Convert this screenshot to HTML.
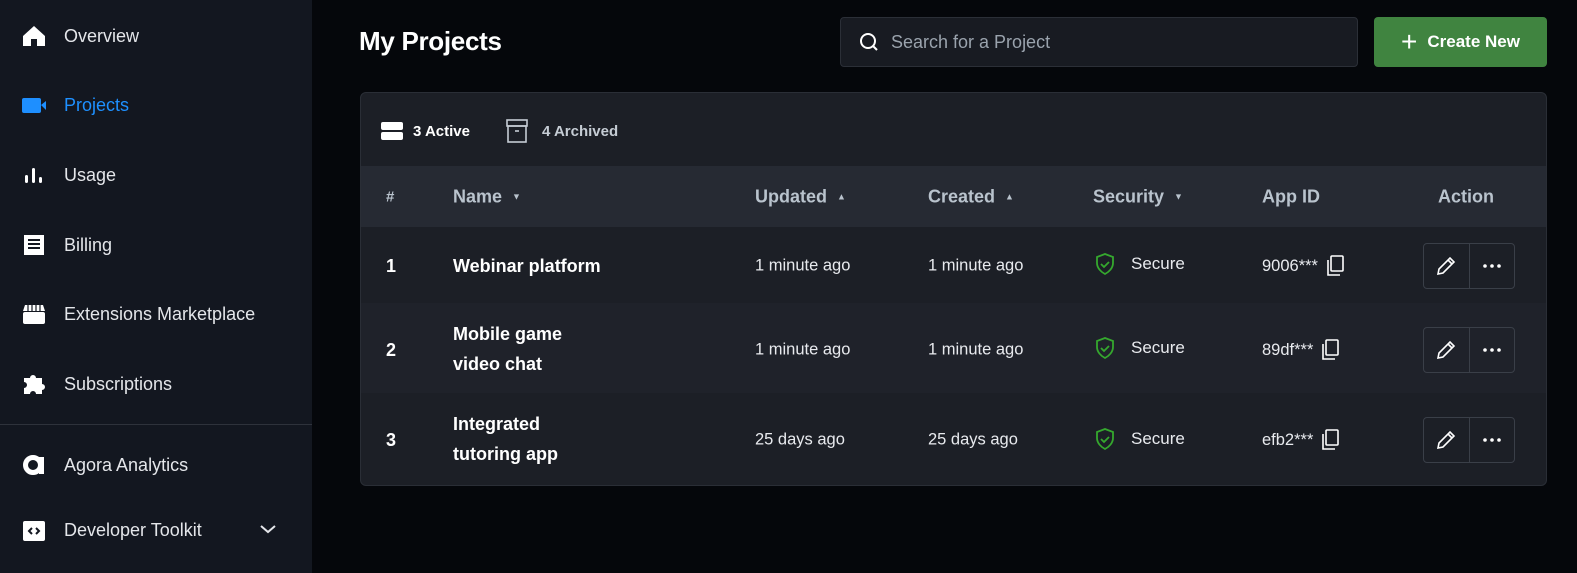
<!DOCTYPE html>
<html><head><style>
*{margin:0;padding:0;box-sizing:border-box}
body{width:1577px;height:573px;background:#05070b;font-family:"Liberation Sans",sans-serif;color:#e6e8ec;position:relative;overflow:hidden}
.sb{position:absolute;left:0;top:0;width:312px;height:573px;background:#131720}
.it{position:absolute;left:22px;display:flex;align-items:center;font-size:18px;color:#e4e6ea;height:30px}
.it svg{width:24px;height:24px;margin-right:18px}
.div{position:absolute;left:0;top:424px;width:312px;height:1px;background:#2e323b}
h1{position:absolute;left:359px;top:26px;font-size:26px;font-weight:bold;color:#fff;letter-spacing:-0.3px}
.search{position:absolute;left:840px;top:17px;width:518px;height:50px;background:#181b22;border:1px solid #2b2f37;border-radius:4px;display:flex;align-items:center;padding-left:18px;font-size:18px;color:#9aa3ad}
.search svg{margin-right:12px}
.btn{position:absolute;left:1374px;top:17px;width:173px;height:50px;background:#408440;border-radius:4px;display:flex;align-items:center;justify-content:center;font-size:17px;font-weight:bold;color:#fff}
.card{position:absolute;left:360px;top:92px;width:1187px;height:394px;background:#1c1f26;border:1px solid #2a2e36;border-radius:6px;overflow:hidden}
.tabs{position:absolute;top:26px;left:20px;display:flex;align-items:center;font-size:15px;font-weight:bold}
.hdr{position:absolute;top:73px;left:0;width:100%;height:61px;background:#262a33}
.row{position:absolute;left:0;width:100%}
.c{position:absolute;font-size:16.5px;color:#e8eaee;transform:translateY(-50%)}
.h{font-size:18px;font-weight:bold;color:#b9c3cd}
.b{font-weight:bold;font-size:18px;color:#fff;line-height:30px}
.act{position:absolute;width:92px;height:46px;border:1px solid #3a3f48;border-radius:4px;display:flex;transform:translateY(-50%)}
.act div{flex:1;display:flex;align-items:center;justify-content:center}
.act div:first-child{border-right:1px solid #3a3f48}
.tri{display:inline-block;margin-left:10px;font-size:9px;vertical-align:3px}
</style></head><body>
<div class="sb">
<div class="it" style="top:21px"><svg viewBox="0 0 24 24"><path d="M12 2L1 12v10h8v-7h6v7h8V12z" fill="#fff"/></svg>Overview</div>
<div class="it" style="top:90px;color:#1e90ff"><svg viewBox="0 0 24 24"><rect x="0" y="5" width="19" height="15" rx="2" fill="#1e8fff"/><path d="M19 12l5-4v9z" fill="#1e8fff"/></svg>Projects</div>
<div class="it" style="top:160px"><svg viewBox="0 0 24 24"><rect x="3" y="12" width="3" height="8" rx="1.5" fill="#fff"/><rect x="10" y="5" width="3" height="15" rx="1.5" fill="#fff"/><rect x="17" y="14" width="3" height="6" rx="1.5" fill="#fff"/></svg>Usage</div>
<div class="it" style="top:230px"><svg viewBox="0 0 24 24"><rect x="2" y="2" width="20" height="20" fill="#fff"/><path d="M6 7h12M6 11h12M6 15h12" stroke="#131720" stroke-width="2"/></svg>Billing</div>
<div class="it" style="top:299px"><svg viewBox="0 0 24 24"><path d="M1 9l2-6h18l2 6z" fill="#fff"/><path d="M6 3v6M10 3v6M14 3v6M18 3v6" stroke="#131720" stroke-width="1.2"/><rect x="1" y="10" width="22" height="12" rx="2" fill="#fff"/></svg>Extensions Marketplace</div>
<div class="it" style="top:369px"><svg viewBox="0 0 24 24"><path d="M2 6h6a3 3 0 016 0h6v6a3 3 0 010 6v4h-6a3 3 0 00-6 0H2v-6a3 3 0 000-6z" fill="#fff"/></svg>Subscriptions</div>
<div class="div"></div>
<div class="it" style="top:450px"><svg viewBox="0 0 24 24"><circle cx="11" cy="12" r="7.5" fill="none" stroke="#fff" stroke-width="5"/><rect x="17" y="4" width="5" height="17" fill="#fff"/></svg>Agora Analytics</div>
<div class="it" style="top:515px"><svg viewBox="0 0 24 24"><rect x="1" y="3" width="22" height="20" rx="2" fill="#fff"/><path d="M10 10l-3 3 3 3M14 10l3 3-3 3" stroke="#131720" stroke-width="2" fill="none"/></svg>Developer Toolkit</div>
<svg style="position:absolute;left:259px;top:523px" width="18" height="12" viewBox="0 0 18 12"><path d="M2 3l7 6 7-6" stroke="#e4e6ea" stroke-width="2" fill="none"/></svg>
</div>
<h1>My Projects</h1>
<div class="search"><svg width="20" height="20" viewBox="0 0 20 20"><circle cx="9" cy="9" r="7" fill="none" stroke="#fff" stroke-width="2"/><path d="M14 14l4 4" stroke="#fff" stroke-width="2"/></svg>Search for a Project</div>
<div class="btn"><span style="font-size:28px;font-weight:normal;margin-right:10px;line-height:1">+</span>Create New</div>
<div class="card">
<div class="tabs"><svg width="22" height="18" viewBox="0 0 22 18"><rect x="0" y="0" width="22" height="8" rx="2" fill="#fff"/><rect x="0" y="10" width="22" height="8" rx="2" fill="#fff"/></svg><span style="margin-left:10px;color:#fff">3 Active</span>
<svg style="margin-left:36px" width="22" height="24" viewBox="0 0 22 24"><rect x="1" y="1" width="20" height="6" fill="none" stroke="#c5ccd4" stroke-width="1.6"/><rect x="2" y="7" width="18" height="16" fill="none" stroke="#c5ccd4" stroke-width="1.6"/><path d="M9 12h4" stroke="#c5ccd4" stroke-width="1.6"/></svg><span style="margin-left:14px;color:#c5ccd4">4 Archived</span></div>
<div class="hdr">
<div class="c h" style="left:25px;top:31px;font-size:15px">#</div>
<div class="c h" style="left:92px;top:31px">Name<span class="tri">▼</span></div>
<div class="c h" style="left:394px;top:31px">Updated<span class="tri">▲</span></div>
<div class="c h" style="left:567px;top:31px">Created<span class="tri">▲</span></div>
<div class="c h" style="left:732px;top:31px">Security<span class="tri">▼</span></div>
<div class="c h" style="left:901px;top:31px">App ID</div>
<div class="c h" style="left:1077px;top:31px">Action</div>
</div>
<div class="row" style="top:134px;height:76px"></div>
<div class="row" style="top:210px;height:90px;background:#1f222a"></div>
<div class="c b" style="left:25px;top:173px">1</div><div class="c b" style="left:92px;top:173px">Webinar platform</div>
<div class="c" style="left:394px;top:173px">1 minute ago</div><div class="c" style="left:567px;top:173px">1 minute ago</div>
<div class="c b" style="left:25px;top:257px">2</div><div class="c b" style="left:92px;top:256px">Mobile game<br>video chat</div>
<div class="c" style="left:394px;top:257px">1 minute ago</div><div class="c" style="left:567px;top:257px">1 minute ago</div>
<div class="c b" style="left:25px;top:347px">3</div><div class="c b" style="left:92px;top:346px">Integrated<br>tutoring app</div>
<div class="c" style="left:394px;top:347px">25 days ago</div><div class="c" style="left:567px;top:347px">25 days ago</div>
<div class="c" style="left:734px;top:171px;display:flex;align-items:center;font-size:17px"><svg width="20" height="22" viewBox="0 0 20 22" style="margin-right:16px"><path d="M10 1l8 3v6c0 5-4 9-8 11C6 19 2 15 2 10V4z" fill="none" stroke="#35a82e" stroke-width="1.8"/><path d="M6 11l3 3 5-5" fill="none" stroke="#35a82e" stroke-width="1.8"/></svg>Secure</div>
<div class="c" style="left:734px;top:255px;display:flex;align-items:center;font-size:17px"><svg width="20" height="22" viewBox="0 0 20 22" style="margin-right:16px"><path d="M10 1l8 3v6c0 5-4 9-8 11C6 19 2 15 2 10V4z" fill="none" stroke="#35a82e" stroke-width="1.8"/><path d="M6 11l3 3 5-5" fill="none" stroke="#35a82e" stroke-width="1.8"/></svg>Secure</div>
<div class="c" style="left:734px;top:346px;display:flex;align-items:center;font-size:17px"><svg width="20" height="22" viewBox="0 0 20 22" style="margin-right:16px"><path d="M10 1l8 3v6c0 5-4 9-8 11C6 19 2 15 2 10V4z" fill="none" stroke="#35a82e" stroke-width="1.8"/><path d="M6 11l3 3 5-5" fill="none" stroke="#35a82e" stroke-width="1.8"/></svg>Secure</div>
<div class="c" style="left:901px;top:173px;display:flex;align-items:center">9006***<svg style="margin-left:8px" width="18" height="22" viewBox="0 0 18 22"><rect x="5" y="1" width="12" height="15" rx="1" fill="none" stroke="#fff" stroke-width="1.6"/><path d="M2 5v15h12" fill="none" stroke="#fff" stroke-width="1.6"/></svg></div>
<div class="c" style="left:901px;top:257px;display:flex;align-items:center">89df***<svg style="margin-left:8px" width="18" height="22" viewBox="0 0 18 22"><rect x="5" y="1" width="12" height="15" rx="1" fill="none" stroke="#fff" stroke-width="1.6"/><path d="M2 5v15h12" fill="none" stroke="#fff" stroke-width="1.6"/></svg></div>
<div class="c" style="left:901px;top:347px;display:flex;align-items:center">efb2***<svg style="margin-left:8px" width="18" height="22" viewBox="0 0 18 22"><rect x="5" y="1" width="12" height="15" rx="1" fill="none" stroke="#fff" stroke-width="1.6"/><path d="M2 5v15h12" fill="none" stroke="#fff" stroke-width="1.6"/></svg></div>
<div class="act" style="left:1062px;top:173px"><div><svg width="22" height="22" viewBox="0 0 22 22"><path d="M3 19l1-5L15 3l4 4L8 18z M13 5l4 4" fill="none" stroke="#fff" stroke-width="1.6"/></svg></div><div><svg width="20" height="4"><circle cx="3" cy="2" r="1.8" fill="#fff"/><circle cx="10" cy="2" r="1.8" fill="#fff"/><circle cx="17" cy="2" r="1.8" fill="#fff"/></svg></div></div>
<div class="act" style="left:1062px;top:257px"><div><svg width="22" height="22" viewBox="0 0 22 22"><path d="M3 19l1-5L15 3l4 4L8 18z M13 5l4 4" fill="none" stroke="#fff" stroke-width="1.6"/></svg></div><div><svg width="20" height="4"><circle cx="3" cy="2" r="1.8" fill="#fff"/><circle cx="10" cy="2" r="1.8" fill="#fff"/><circle cx="17" cy="2" r="1.8" fill="#fff"/></svg></div></div>
<div class="act" style="left:1062px;top:347px"><div><svg width="22" height="22" viewBox="0 0 22 22"><path d="M3 19l1-5L15 3l4 4L8 18z M13 5l4 4" fill="none" stroke="#fff" stroke-width="1.6"/></svg></div><div><svg width="20" height="4"><circle cx="3" cy="2" r="1.8" fill="#fff"/><circle cx="10" cy="2" r="1.8" fill="#fff"/><circle cx="17" cy="2" r="1.8" fill="#fff"/></svg></div></div>
</div>
</body></html>
